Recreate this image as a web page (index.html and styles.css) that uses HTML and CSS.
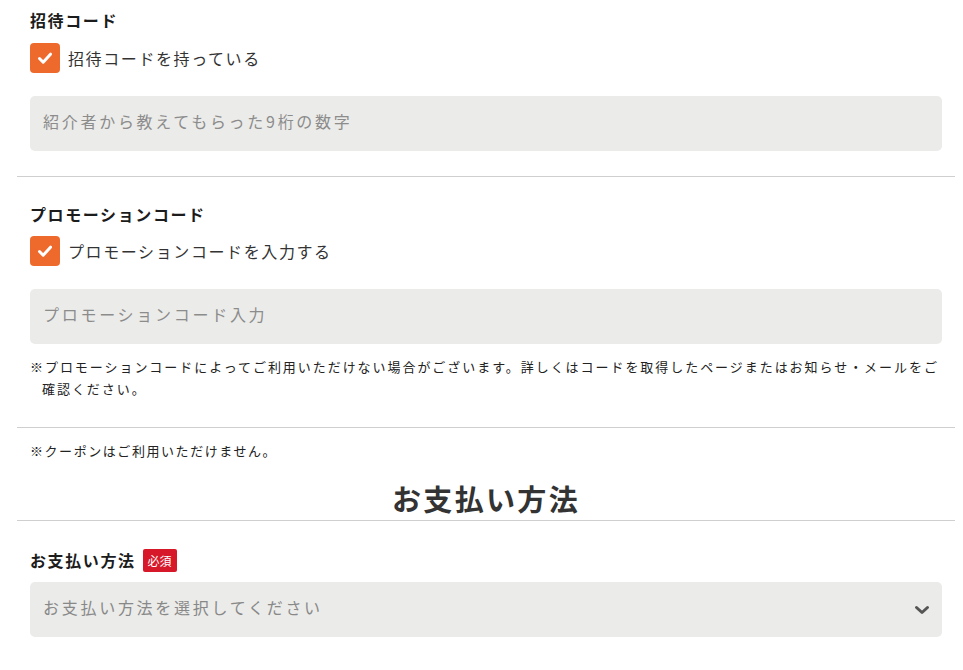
FILE: index.html
```html
<!DOCTYPE html>
<html lang="ja">
<head>
<meta charset="utf-8">
<link rel="stylesheet" href="styles.css">
</head>
<body>
<div class="page">
  <section class="block block-invite">
    <div class="field-title">招待コード</div>
    <label class="check-row">
      <span class="checkbox"><svg viewBox="0 0 30 30" width="30" height="30"><path d="M9.5 15.5 L13.2 19.2 L20.5 11.2" fill="none" stroke="#fff" stroke-width="3" stroke-linecap="round" stroke-linejoin="round"/></svg></span>
      <span class="check-label">招待コードを持っている</span>
    </label>
    <input class="text-input" type="text" placeholder="紹介者から教えてもらった9桁の数字">
  </section>

  <section class="block block-promo">
    <div class="field-title">プロモーションコード</div>
    <label class="check-row">
      <span class="checkbox"><svg viewBox="0 0 30 30" width="30" height="30"><path d="M9.5 15.5 L13.2 19.2 L20.5 11.2" fill="none" stroke="#fff" stroke-width="3" stroke-linecap="round" stroke-linejoin="round"/></svg></span>
      <span class="check-label">プロモーションコードを入力する</span>
    </label>
    <input class="text-input" type="text" placeholder="プロモーションコード入力">
    <p class="note">※プロモーションコードによってご利用いただけない場合がございます。詳しくはコードを取得したページまたはお知らせ・メールをご確認ください。</p>
  </section>

  <section class="block block-coupon">
    <p class="coupon-note">※クーポンはご利用いただけません。</p>
    <h2 class="section-heading">お支払い方法</h2>
  </section>

  <section class="block block-pay">
    <div class="field-title">お支払い方法<span class="badge">必須</span></div>
    <div class="select-wrap">
      <select class="select">
        <option>お支払い方法を選択してください</option>
      </select>
      <svg class="chevron" viewBox="0 0 16 10" width="16" height="10"><path d="M2.5 2.5 L8 7.5 L13.5 2.5" fill="none" stroke="#555" stroke-width="3" stroke-linecap="round" stroke-linejoin="round"/></svg>
    </div>
  </section>
</div>
</body>
</html>
```
FILE: styles.css
```css
* { box-sizing: border-box; }
html, body { margin: 0; padding: 0; background: #fff; }
body {
  font-family: "Noto Sans CJK JP", "Noto Sans", sans-serif;
  color: #333;
}
.page {
  margin: 0 8px 0 17px;
}
.block {
  padding: 0 13px;
  border-bottom: 1px solid #cfcfcf;
}
.block-invite { padding-top: 8px; padding-bottom: 25px; }
.block-promo { padding-top: 25px; padding-bottom: 27px; }
.block-coupon { padding-top: 12px; padding-bottom: 2px; }
.block-pay { padding-top: 27px; border-bottom: none; }

.field-title {
  font-size: 16px;
  line-height: 24px;
  font-weight: 700;
  color: #1c1c1c;
  letter-spacing: 0.1em;
  display: flex;
  align-items: center;
}
.check-row {
  display: flex;
  align-items: center;
  margin-top: 11px;
  height: 30px;
}
.block-promo .check-row { margin-top: 10px; }
.checkbox {
  width: 30px;
  height: 30px;
  border-radius: 4px;
  background: #ee6a2c;
  display: flex;
}
.check-label {
  margin-left: 8px;
  font-size: 16px;
  line-height: 24px;
  letter-spacing: 0.1em;
  color: #333;
}
.text-input, .select {
  display: block;
  width: 100%;
  height: 55px;
  margin-top: 23px;
  border: none;
  border-radius: 5px;
  background: #ebebe9;
  padding: 0 13px 5px;
  font-family: inherit;
  font-size: 16px;
  letter-spacing: 0.17em;
  color: #888;
  outline: none;
}
.text-input::placeholder { color: #8c8c8c; }
.note {
  margin: 12px 0 0;
  font-size: 13px;
  line-height: 22px;
  letter-spacing: 0.15em;
  color: #222;
  padding-left: 12px;
  text-indent: -12px;
}
.coupon-note {
  margin: 0;
  font-size: 13px;
  line-height: 22px;
  letter-spacing: 0.12em;
  color: #222;
}
.section-heading {
  margin: 16px 0 0;
  text-align: center;
  font-size: 29px;
  line-height: 40px;
  font-weight: 700;
  letter-spacing: 0.08em;
  color: #333;
}
.badge {
  display: inline-block;
  margin-left: 7px;
  background: #d7182a;
  color: #fff;
  font-size: 12px;
  font-weight: 400;
  line-height: 23px;
  height: 23px;
  padding: 0 5px;
  border-radius: 2px;
  letter-spacing: 0;
}
.select-wrap {
  position: relative;
  margin-top: 10px;
}
.select {
  margin-top: 0;
  appearance: none;
  -webkit-appearance: none;
}
.chevron {
  position: absolute;
  right: 12px;
  top: 23px;
}
```
